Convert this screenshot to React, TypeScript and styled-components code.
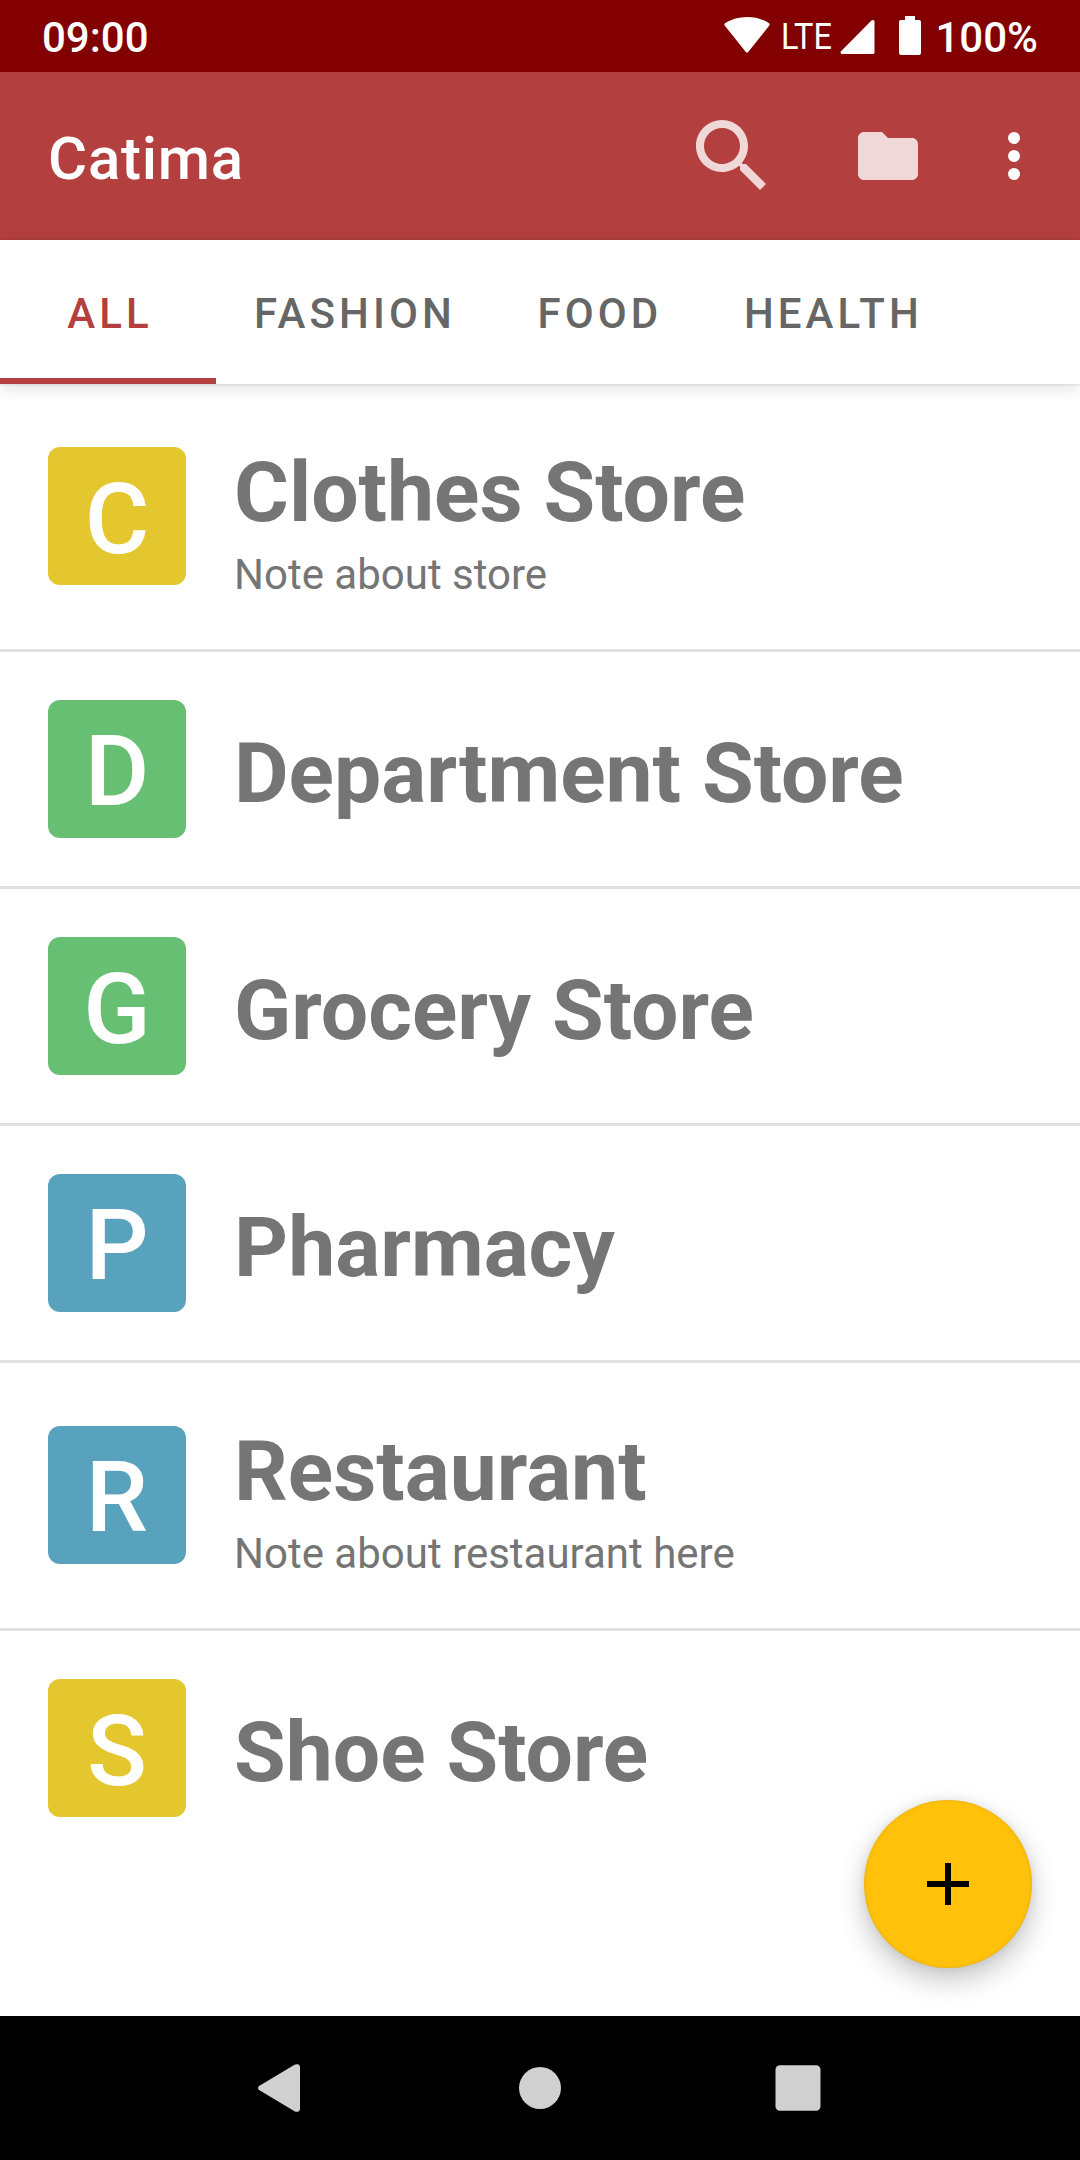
import React from "react";
import styled, { createGlobalStyle } from "styled-components";

const GlobalStyle = createGlobalStyle`
  * { box-sizing: border-box; }
  body { margin: 0; background: #fff; font-family: Roboto, sans-serif; }
`;

const Screen = styled.div`
  position: relative;
  display: flex;
  flex-direction: column;
  width: 1080px;
  height: 2160px;
  overflow: hidden;
  background: #fff;
`;

const StatusBar = styled.header`
  display: flex;
  align-items: center;
  justify-content: space-between;
  flex: none;
  height: 72px;
  padding: 2px 42px 0 42px;
  background: #820000;
  color: #fff;
`;

const StatusText = styled.span`
  padding-top: 2px;
  font-size: 42px;
  font-weight: 500;
  line-height: 50px;
`;

const StatusIcons = styled.div`
  display: flex;
  align-items: center;
  height: 70px;
`;

const StatusSvg = styled.svg<{ $gap: number; $lift?: number }>`
  display: block;
  flex: none;
  fill: #fff;
  margin-right: ${(p) => p.$gap}px;
  margin-bottom: ${(p) => p.$lift ?? 0}px;
`;

const Network = styled.span`
  width: 59px;
  font-size: 37.5px;
  font-weight: 400;
  line-height: 44px;
  padding-bottom: 3px;
  white-space: nowrap;
  transform: scaleX(0.865);
  transform-origin: left;
`;

const Toolbar = styled.div`
  display: flex;
  align-items: center;
  flex: none;
  height: 168px;
  padding: 0 30px 0 48px;
  background: #b43f3f;
`;

const AppTitle = styled.h1`
  flex: 1;
  margin: 0;
  padding-top: 5px;
  color: #fff;
  font-size: 60px;
  font-weight: 500;
  line-height: 70px;
  letter-spacing: 0.75px;
`;

const IconButton = styled.button<{ $gap: number; $opacity: number }>`
  display: flex;
  margin: 0 ${(p) => p.$gap}px 0 0;
  padding: 0;
  border: 0;
  background: none;
  opacity: ${(p) => p.$opacity};

  svg { display: block; fill: #fff; }
`;

const TabBar = styled.nav`
  position: relative;
  z-index: 1;
  display: flex;
  flex: none;
  height: 144px;
  background: #fff;
  box-shadow: 0 0 3px rgba(0, 0, 0, 0.14), 0 5px 14px rgba(0, 0, 0, 0.11);
`;

const Tab = styled.button<{ $active?: boolean }>`
  display: flex;
  align-items: center;
  justify-content: center;
  min-width: 216px;
  padding: 9px 34px 0 38px;
  border: 0;
  border-bottom: 6px solid ${(p) => (p.$active ? "#b43f3f" : "transparent")};
  background: none;
  color: ${(p) => (p.$active ? "#b43f3f" : "#666")};
  font: 500 42px/50px Roboto, sans-serif;
  letter-spacing: 4.1px;
`;

const CardList = styled.ul`
  flex: 1;
  margin: 0;
  padding: 0;
  list-style: none;
`;

const CardRow = styled.li`
  display: flex;
  align-items: center;
  gap: 48px;
  padding: 48px;

  & + & { border-top: 3px solid #e0e0e0; }
`;

const Avatar = styled.div<{ $color: string; $withNote: boolean; $round: boolean }>`
  flex: none;
  width: 138px;
  height: 138px;
  margin-bottom: ${(p) => (p.$withNote ? 1 : 0)}px;
  padding-top: ${(p) => (p.$round ? 5 : 4)}px;
  border-radius: 12px;
  background: ${(p) => p.$color};
  color: #fff;
  font-size: 99px;
  font-weight: 500;
  line-height: 134px;
  text-align: center;
`;

const StoreName = styled.div`
  padding-top: 8px;
  color: #757575;
  font-size: 84px;
  font-weight: 700;
  line-height: 105px;
`;

const StoreNote = styled.div`
  padding-top: 3px;
  color: #757575;
  font-size: 42px;
  line-height: 53px;
`;

const AddButton = styled.button`
  position: absolute;
  right: 48px;
  bottom: 192px;
  display: flex;
  align-items: center;
  justify-content: center;
  width: 168px;
  height: 168px;
  padding: 0;
  border: 0;
  border-radius: 50%;
  background: #ffc10a;
  box-shadow: inset 0 0 3px rgba(190, 140, 0, 0.45), 0 0 8px rgba(0, 0, 0, 0.08),
    0 12px 28px rgba(0, 0, 0, 0.23);
`;

const NavBar = styled.footer`
  display: grid;
  grid-template-columns: 258px 42px 219px 42px 214px 46px;
  align-items: center;
  flex: none;
  height: 144px;
  background: #000;

  svg { display: block; fill: #d0d0d0; }
`;

const stores = [
  { name: "Clothes Store", note: "Note about store", color: "#e4c62e" },
  { name: "Department Store", color: "#67bf74" },
  { name: "Grocery Store", color: "#67bf74" },
  { name: "Pharmacy", color: "#59a2be" },
  { name: "Restaurant", note: "Note about restaurant here", color: "#59a2be" },
  { name: "Shoe Store", color: "#e4c62e" },
];

const tabs = ["ALL", "FASHION", "FOOD", "HEALTH"];

export default function App() {
  return (
    <Screen>
      <GlobalStyle />
      <StatusBar>
        <StatusText>09:00</StatusText>
        <StatusIcons>
          <StatusSvg $gap={11} $lift={4} width="46" height="38" viewBox="0 0 46 38">
            <path d="M.9 9.800Q-.4 8.200 1.300 7Q10.500 1 23 1T44.700 7Q46.400 8.200 45.100 9.800L24.200 36Q23 37.400 21.800 36Z" />
          </StatusSvg>
          <Network>LTE</Network>
          <StatusSvg $gap={24} width="35" height="36" viewBox="0 0 35 36">
            <path d="M33 1q1.500 0 1.500 1.500V33.500q0 1.500-1.500 1.500H1.800Q0 34.500.8 32.500L31.500 1.600Q32.100 1 33 1Z" />
          </StatusSvg>
          <StatusSvg $gap={14} $lift={4} width="22" height="40" viewBox="0 0 22 40">
            <path d="M6 1h10v4h4q2 0 2 2v31q0 2-2 2H2q-2 0-2-2V7q0-2 2-2h4Z" />
          </StatusSvg>
          <StatusText>100%</StatusText>
        </StatusIcons>
      </StatusBar>
      <Toolbar>
        <AppTitle>Catima</AppTitle>
        <IconButton $gap={72} $opacity={0.8} aria-label="Search">
          <svg width="96" height="96" viewBox="0 0 24 24">
            <path d="M15.500 14h-.79l-.28-.27C15.410 12.590 16 11.110 16 9.500 16 5.910 13.090 3 9.500 3S3 5.910 3 9.500 5.910 16 9.500 16c1.610 0 3.090-.59 4.230-1.570l.27.28v.79l5 4.990L20.490 19l-4.990-5zm-6 0C7.010 14 5 11.990 5 9.500S7.010 5 9.500 5 14 7.010 14 9.500 11.990 14 9.500 14z" />
          </svg>
        </IconButton>
        <IconButton $gap={54} $opacity={0.8} aria-label="Groups">
          <svg width="72" height="72" viewBox="0 0 24 24">
            <path d="M10 4H4c-1.100 0-1.990.9-1.990 2L2 18c0 1.100.9 2 2 2h16c1.100 0 2-.9 2-2V8c0-1.100-.9-2-2-2h-8l-2-2z" />
          </svg>
        </IconButton>
        <IconButton $gap={0} $opacity={1} aria-label="More options">
          <svg width="72" height="72" viewBox="0 0 24 24">
            <circle cx="12" cy="6" r="2" />
            <circle cx="12" cy="12" r="2" />
            <circle cx="12" cy="18" r="2" />
          </svg>
        </IconButton>
      </Toolbar>
      <TabBar>
        {tabs.map((tab, i) => (
          <Tab key={tab} $active={i === 0}>
            {tab}
          </Tab>
        ))}
      </TabBar>
      <CardList>
        {stores.map((store) => (
          <CardRow key={store.name}>
            <Avatar
              $color={store.color}
              $withNote={Boolean(store.note)}
              $round={"CGOQS".includes(store.name[0])}
            >
              {store.name[0]}
            </Avatar>
            <div>
              <StoreName>{store.name}</StoreName>
              {store.note && <StoreNote>{store.note}</StoreNote>}
            </div>
          </CardRow>
        ))}
      </CardList>
      <NavBar>
        <span />
        <svg width="42" height="48" viewBox="0 0 42 48">
          <path d="M36.500.8Q38 0 40 .3Q42 1 42 3V45Q42 47 40 47.700Q38 48 36.500 47.200L1.500 26.200Q0 25.200 0 24T1.500 21.800Z" />
        </svg>
        <span />
        <svg width="42" height="42" viewBox="0 0 42 42">
          <circle cx="21" cy="21" r="21" />
        </svg>
        <span />
        <svg width="46" height="46" viewBox="0 0 46 46">
          <rect x=".5" y=".3" width="45" height="45.400" rx="4.500" />
        </svg>
      </NavBar>
      <AddButton aria-label="Add card">
        <svg width="72" height="72" viewBox="0 0 24 24">
          <path d="M19 13h-6v6h-2v-6H5v-2h6V5h2v6h6v2z" />
        </svg>
      </AddButton>
    </Screen>
  );
}
